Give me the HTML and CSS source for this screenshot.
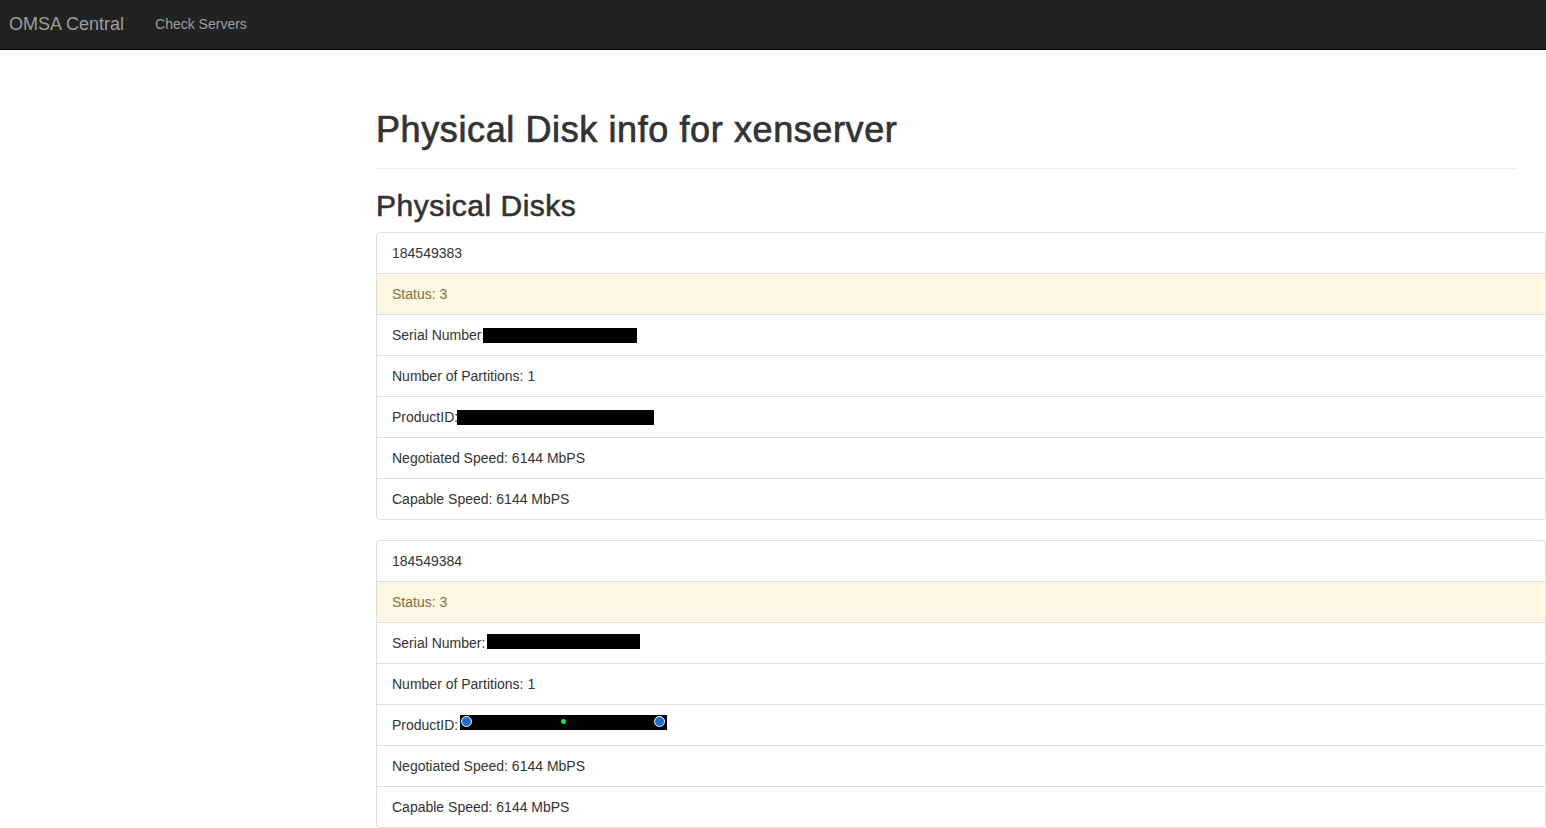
FILE: index.html
```html
<!DOCTYPE html>
<html>
<head>
<meta charset="utf-8">
<title>OMSA Central</title>
<link rel="stylesheet" href="styles.css">
</head>
<body>
<nav class="navbar">
  <a class="brand" href="#">OMSA Central</a>
  <a class="nav-link" href="#">Check Servers</a>
</nav>
<main class="main">
  <div class="page-header">
    <h1>Physical Disk info for xenserver</h1>
  </div>
  <h2>Physical Disks</h2>

  <ul class="list-group">
    <li class="item">184549383</li>
    <li class="item warning">Status: 3</li>
    <li class="item">Serial Number:<span class="redact r-serial1"></span></li>
    <li class="item">Number of Partitions: 1</li>
    <li class="item">ProductID:<span class="redact r-prod1"></span></li>
    <li class="item">Negotiated Speed: 6144 MbPS</li>
    <li class="item">Capable Speed: 6144 MbPS</li>
  </ul>

  <ul class="list-group">
    <li class="item">184549384</li>
    <li class="item warning">Status: 3</li>
    <li class="item">Serial Number: <span class="redact r-serial2"></span></li>
    <li class="item">Number of Partitions: 1</li>
    <li class="item">ProductID:<span class="redact r-prod2"><span class="dot dot-left"></span><span class="dot-green"></span><span class="dot dot-right"></span></span></li>
    <li class="item">Negotiated Speed: 6144 MbPS</li>
    <li class="item">Capable Speed: 6144 MbPS</li>
  </ul>
</main>
</body>
</html>
```

FILE: styles.css
```css
html, body {
  margin: 0;
  padding: 0;
}
body {
  font-family: "Liberation Sans", Arial, sans-serif;
  font-size: 14px;
  line-height: 20px;
  color: #333;
  background: #fff;
}
.navbar {
  display: flex;
  align-items: center;
  height: 49px;
  background: #222;
  border-bottom: 1px solid #080808;
}
.brand {
  padding: 14px 15px 16px 9px;
  font-size: 18px;
  line-height: 20px;
  color: #9d9d9d;
  text-decoration: none;
}
.nav-link {
  padding: 14px 15px 16px 16px;
  font-size: 14px;
  line-height: 20px;
  color: #9d9d9d;
  text-decoration: none;
}
.main {
  margin-left: 376px;
  padding-top: 19px;
}
.page-header {
  width: 1140px;
  margin: 40px 0 20px;
  padding-bottom: 9px;
  border-bottom: 1px solid #eee;
}
h1 {
  margin: 0 0 10px;
  padding-top: 2px;
  font-size: 36px;
  line-height: 37.6px;
  font-weight: 500;
  letter-spacing: 0.6px;
  -webkit-text-stroke: 0.7px #333;
  color: #333;
}
h2 {
  margin: 20px 0 10px;
  padding-top: 1px;
  font-size: 30px;
  line-height: 32px;
  font-weight: 500;
  letter-spacing: 0.5px;
  -webkit-text-stroke: 0.6px #333;
  color: #333;
}
.list-group {
  list-style: none;
  margin: 0 0 20px;
  padding: 0;
  width: 1170px;
}
.item {
  position: relative;
  padding: 10px 15px;
  margin-bottom: -1px;
  border: 1px solid #ddd;
  background: #fff;
}
.item:first-child {
  border-top-left-radius: 4px;
  border-top-right-radius: 4px;
}
.item:last-child {
  margin-bottom: 0;
  border-bottom-left-radius: 4px;
  border-bottom-right-radius: 4px;
}
.item.warning {
  color: #8a6d3b;
  background: #fcf8e3;
}
.redact {
  display: inline-block;
  position: relative;
  background: #000;
  vertical-align: top;
}
.r-serial1 {
  width: 154px;
  height: 15px;
  margin-left: -2px;
  margin-top: 3px;
}
.r-serial2 {
  width: 153px;
  height: 15px;
  margin-left: -2px;
  margin-top: 1px;
}
.r-prod1 {
  width: 197px;
  height: 15px;
  margin-left: -1px;
  margin-top: 3px;
}
.r-prod2 {
  width: 207px;
  height: 15px;
  margin-left: 2px;
  margin-top: 0;
}
.dot {
  position: absolute;
  top: 1px;
  width: 9px;
  height: 9px;
  border-radius: 50%;
  background: #1a6fd6;
  border: 1px solid #fff;
}
.dot-left {
  left: 1px;
}
.dot-right {
  right: 2px;
}
.dot-green {
  position: absolute;
  top: 4px;
  left: 101px;
  width: 5px;
  height: 5px;
  border-radius: 50%;
  background: #1fe03a;
}
```
